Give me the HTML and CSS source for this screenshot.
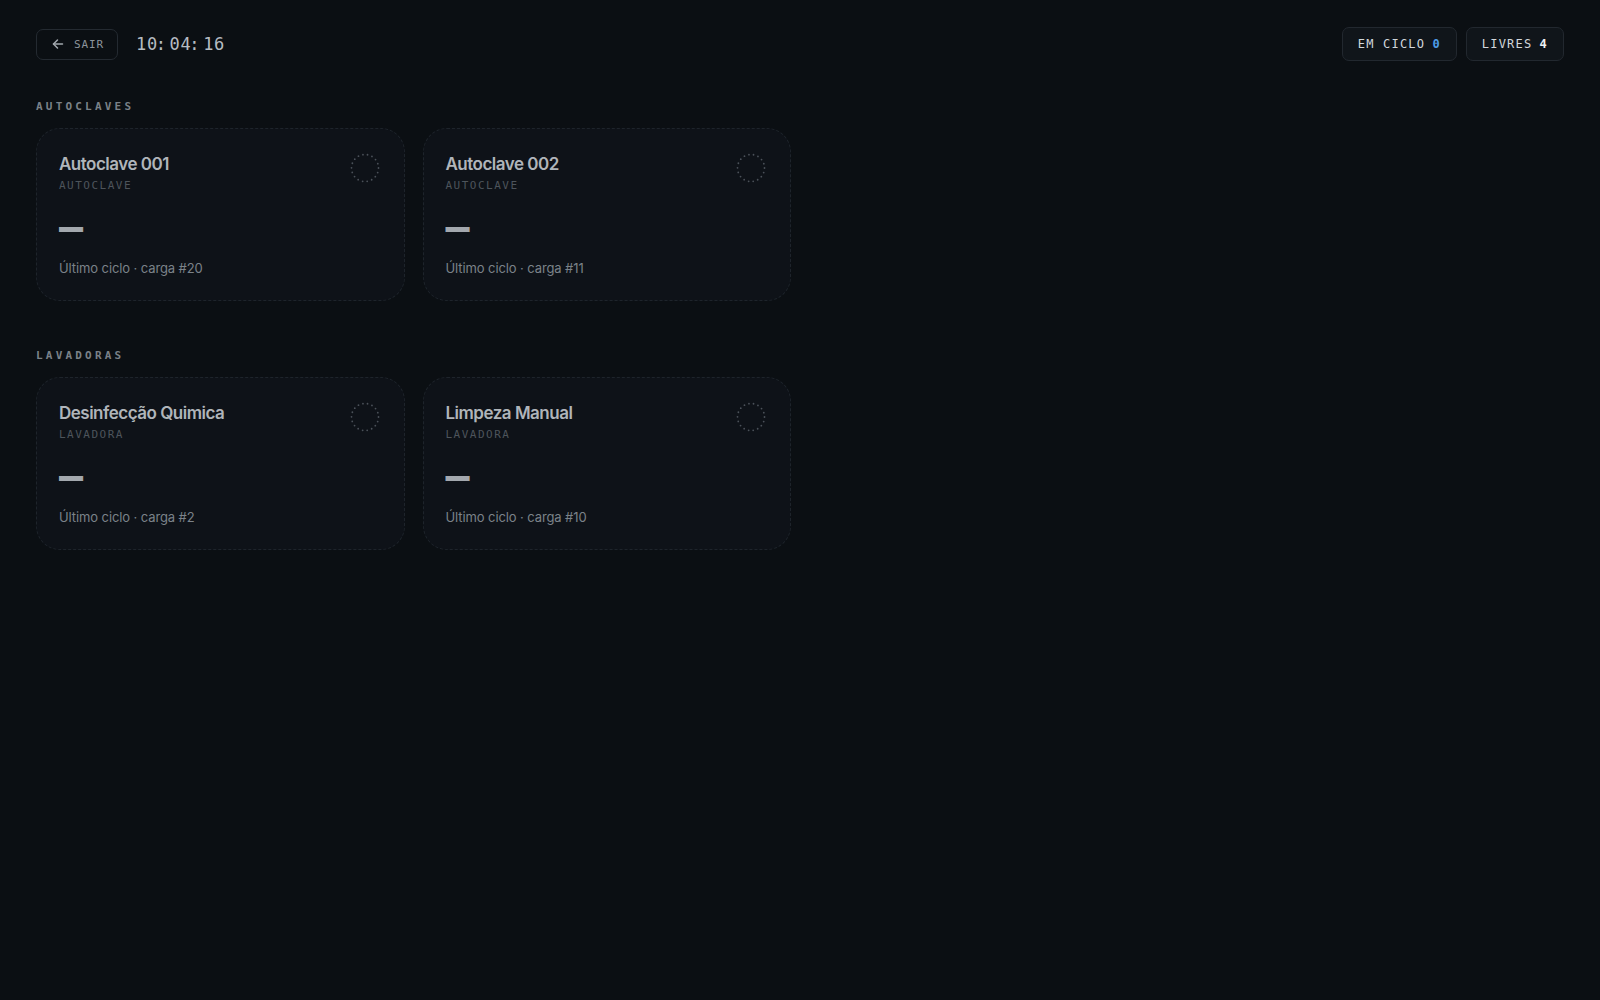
FILE: index.html
```html
<!DOCTYPE html>
<html lang="pt-BR">
<head>
<meta charset="utf-8">
<title>Painel de equipamentos</title>
<link rel="stylesheet" href="styles.css">
</head>
<body>
  <header class="topbar">
    <div class="topbar-left">
      <button class="btn-exit" type="button">
        <svg class="btn-exit-icon" width="12" height="12" viewBox="0 0 12 12" fill="none" stroke="currentColor" stroke-width="1.5" stroke-linecap="round" stroke-linejoin="round">
          <path d="M10.5 6H1.5"/>
          <path d="M5.5 2L1.5 6L5.5 10"/>
        </svg>
        <span>SAIR</span>
      </button>
      <div class="clock">10<span class="clock-sep">:</span>04<span class="clock-sep">:</span>16</div>
    </div>
    <div class="topbar-right">
      <div class="stat">EM CICLO <b class="stat-value stat-value--active">0</b></div>
      <div class="stat">LIVRES <b class="stat-value">4</b></div>
    </div>
  </header>

  <main class="sections">
    <section class="group">
      <h2 class="group-title">AUTOCLAVES</h2>
      <div class="grid">
        <article class="card">
          <div class="card-head">
            <div>
              <h3 class="card-name">Autoclave 001</h3>
              <div class="card-type">AUTOCLAVE</div>
            </div>
            <svg class="card-status" width="34" height="34" viewBox="0 0 34 34"><circle cx="17" cy="17" r="13.5"/></svg>
          </div>
          <div class="card-value">—</div>
          <div class="card-foot">Último ciclo · carga #20</div>
        </article>
        <article class="card">
          <div class="card-head">
            <div>
              <h3 class="card-name">Autoclave 002</h3>
              <div class="card-type">AUTOCLAVE</div>
            </div>
            <svg class="card-status" width="34" height="34" viewBox="0 0 34 34"><circle cx="17" cy="17" r="13.5"/></svg>
          </div>
          <div class="card-value">—</div>
          <div class="card-foot">Último ciclo · carga #11</div>
        </article>
      </div>
    </section>

    <section class="group">
      <h2 class="group-title">LAVADORAS</h2>
      <div class="grid">
        <article class="card">
          <div class="card-head">
            <div>
              <h3 class="card-name">Desinfecção Quimica</h3>
              <div class="card-type">LAVADORA</div>
            </div>
            <svg class="card-status" width="34" height="34" viewBox="0 0 34 34"><circle cx="17" cy="17" r="13.5"/></svg>
          </div>
          <div class="card-value">—</div>
          <div class="card-foot">Último ciclo · carga #2</div>
        </article>
        <article class="card">
          <div class="card-head">
            <div>
              <h3 class="card-name">Limpeza Manual</h3>
              <div class="card-type">LAVADORA</div>
            </div>
            <svg class="card-status" width="34" height="34" viewBox="0 0 34 34"><circle cx="17" cy="17" r="13.5"/></svg>
          </div>
          <div class="card-value">—</div>
          <div class="card-foot">Último ciclo · carga #10</div>
        </article>
      </div>
    </section>
  </main>
</body>
</html>
```

FILE: styles.css
```css
* {
  box-sizing: border-box;
}

html,
body {
  height: 100%;
}

body {
  margin: 0;
  padding: 27px 36px;
  background: #0b0f13;
  color: #c4c9ce;
  font-family: Inter, "Liberation Sans", sans-serif;
}

/* ---- top bar ---- */
.topbar {
  display: flex;
  align-items: center;
  justify-content: space-between;
  height: 34px;
}

.topbar-left {
  display: flex;
  align-items: center;
  gap: 18px;
}

.btn-exit {
  display: flex;
  align-items: center;
  gap: 10px;
  height: 31px;
  padding: 0 13px 0 15px;
  background: transparent;
  border: 1px solid #242a31;
  border-radius: 7px;
  color: #8d949b;
  font-family: "DejaVu Sans Mono", monospace;
  font-size: 11px;
  letter-spacing: 0.9px;
  cursor: pointer;
}

.btn-exit-icon {
  color: #a3a9af;
  flex: none;
}

.clock {
  font-family: "DejaVu Sans Mono", monospace;
  font-size: 17px;
  letter-spacing: 0.6px;
  color: #b6bcc2;
}

/* colon sits tight to the hours, with breathing room after */
.clock-sep {
  margin: 0 3px 0 -2px;
}

.topbar-right {
  display: flex;
  align-items: center;
  gap: 9px;
}

.stat {
  display: flex;
  align-items: center;
  gap: 0.6em;
  height: 34px;
  padding: 0 15px 0 15px;
  background: #10151a;
  border: 1px solid #22282f;
  border-radius: 7px;
  color: #d2d7dc;
  font-family: "DejaVu Sans Mono", monospace;
  font-size: 12px;
  letter-spacing: 1.2px;
}

.stat-value {
  font-weight: 700;
  color: #eef1f4;
}

.stat-value--active {
  color: #4d9ce6;
}

/* ---- equipment groups ---- */
.sections {
  margin-top: 38px;
}

.group + .group {
  margin-top: 47px;
}

.group-title {
  margin: 0 0 13px;
  font-family: "DejaVu Sans Mono", monospace;
  font-size: 11px;
  line-height: 16px;
  font-weight: 700;
  letter-spacing: 3.2px;
  color: #7a8188;
}

.grid {
  display: grid;
  grid-template-columns: repeat(4, 1fr);
  gap: 18px;
}

.card {
  display: flex;
  flex-direction: column;
  padding: 24px 22px 22px;
  background: #0e1218;
  border: 1px dashed #1e242b;
  border-radius: 24px;
}

.card-head {
  display: flex;
  justify-content: space-between;
  align-items: flex-start;
}

.card-name {
  margin: 0;
  font-size: 17px;
  line-height: 22px;
  font-weight: 600;
  letter-spacing: -0.5px;
  color: #b0b5ba;
}

.card-type {
  margin-top: 4px;
  font-family: "DejaVu Sans Mono", monospace;
  font-size: 11px;
  line-height: 14px;
  letter-spacing: 1.5px;
  color: #4d545b;
}

.card-status {
  flex: none;
  margin-top: -2px;
}

.card-status circle {
  fill: none;
  stroke: #4b5159;
  stroke-width: 1.8;
  stroke-linecap: round;
  stroke-dasharray: 0 4.7;
}

.card-value {
  margin-top: 14px;
  font-family: "DejaVu Sans Mono", monospace;
  font-size: 40px;
  line-height: 40px;
  font-weight: 700;
  color: #a3a8ae;
}

.card-foot {
  margin-top: 11px;
  font-size: 13px;
  line-height: 20px;
  letter-spacing: -0.1px;
  color: #7b8289;
}
```
